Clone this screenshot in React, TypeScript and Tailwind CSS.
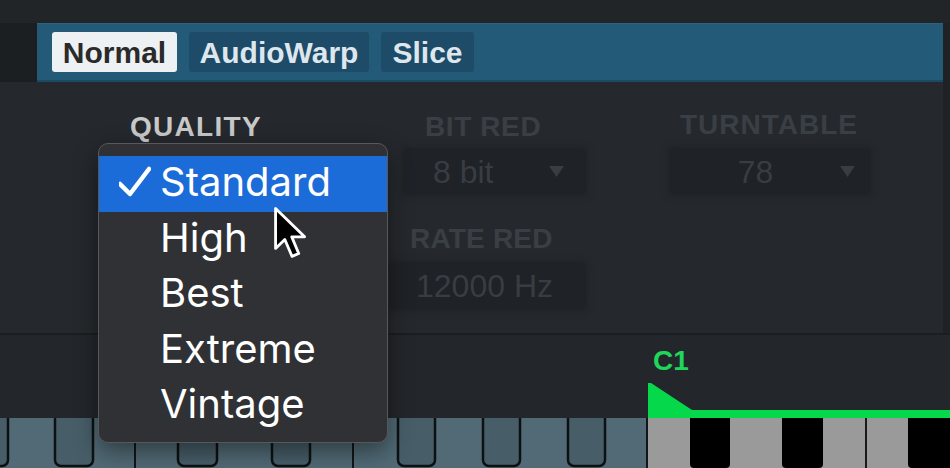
import React from "react"

const tabs = [
  { name: "Normal", active: true, w: "w-[125px]" },
  { name: "AudioWarp", active: false, w: "w-[180px]" },
  { name: "Slice", active: false, w: "w-[93px]" },
]

const qualities = ["Standard", "High", "Best", "Extreme", "Vintage"]

// black key spans across the visible octave strip
const tintedBlack: [number, number][] = [
  [-30, 8],
  [55, 93],
  [178, 217],
  [272, 310],
  [398, 435],
  [483, 520],
  [568, 605],
]
const activeBlack: [number, number][] = [
  [690, 730],
  [782, 823],
  [908, 960],
]

function Arrow() {
  return (
    <svg width="15" height="11" viewBox="0 0 15 11">
      <polygon points="0,0 15,0 7.5,11" fill="#383d43" />
    </svg>
  )
}

function Keyboard() {
  return (
    <svg width="950" height="50" viewBox="0 0 950 50" className="block">
      <rect x="0" y="0" width="648" height="50" fill="#516a75" />
      <rect x="648" y="0" width="302" height="50" fill="#9a9a9a" />
      {/* white key seams */}
      <rect x="134" y="0" width="2" height="50" fill="#131619" />
      <rect x="352" y="0" width="2" height="50" fill="#131619" />
      <rect x="646" y="0" width="2" height="50" fill="#131619" />
      <rect x="865" y="0" width="2" height="50" fill="#1a1a1a" />
      {tintedBlack.map(([a, b]) => (
        <rect
          key={a}
          x={a}
          y={-12}
          width={b - a}
          height={60}
          rx={6}
          fill="#475e69"
          stroke="#0e1113"
          strokeWidth={2.5}
        />
      ))}
      {activeBlack.map(([a, b]) => (
        <rect key={a} x={a} y={-12} width={b - a} height={62} rx={4} fill="#000" />
      ))}
    </svg>
  )
}

function Cursor() {
  return (
    <svg width="36" height="54" viewBox="0 0 14 21">
      <path
        d="M1 1 L1 16.5 L4.6 13 L7.4 19.6 L10 18.5 L7.3 12 L12.3 12 Z"
        fill="#000"
        stroke="#fff"
        strokeWidth="1.1"
        strokeLinejoin="round"
      />
    </svg>
  )
}

export default function App() {
  return (
    <div className="w-[950px] h-[468px] overflow-hidden flex flex-col bg-[#24282c] font-['Liberation_Sans',Arial,sans-serif]">
      <div className="h-[23px] bg-[#222528]" />

      {/* mode tabs */}
      <div className="flex h-[59px]">
        <div className="w-[37px] bg-[#1c1f22]" />
        <div className="flex-1 flex items-center gap-[12px] pl-[15px] bg-[#235a78] border-t border-[#2a6383] border-b-2 border-b-[#1d4a63]">
          {tabs.map((t) => (
            <div
              key={t.name}
              className={`${t.w} h-[40px] flex items-center justify-center text-[30px] font-bold rounded-[3px] ${
                t.active ? "bg-[#eef1f3] text-[#2a2a2a]" : "bg-[#1d4b68] text-[#dfe7ee]"
              }`}
            >
              {t.name}
            </div>
          ))}
        </div>
        <div className="w-[7px] bg-[#1f2225]" />
      </div>

      {/* sample processing panel */}
      <div className="flex h-[251px]">
        <div className="relative flex-1 flex bg-[#25292d]">
          <div className="ml-[100px] w-[285px] flex flex-col">
            <div className="ml-[30px] mt-[31px] h-[28px] leading-[28px] text-[28px] font-bold tracking-[1.3px] text-[#c9c9c9]">
              QUALITY
            </div>
            <div className="mt-[9px] h-[43px] bg-[#1f2226]" />
          </div>

          <div className="ml-[6px] w-[193px] flex flex-col">
            <div className="ml-[34px] mt-[31px] h-[28px] leading-[28px] text-[28px] font-bold tracking-[0.6px] text-[#3a3f45]">
              BIT RED
            </div>
            <div className="ml-[14px] mt-[9px] h-[43px] flex items-center pl-[28px] pr-[20px] bg-[#1f2226] shadow-[0_0_6px_2px_rgba(24,27,30,0.6)]">
              <span className="flex-1 text-[32px] text-[#383d43]">8 bit</span>
              <Arrow />
            </div>
            <div className="ml-[19px] mt-[32px] h-[28px] leading-[28px] text-[28px] font-bold tracking-[0.2px] text-[#3a3f45]">
              RATE RED
            </div>
            <div className="mt-[11px] h-[44px] flex items-center pl-[25px] bg-[#1f2226] shadow-[0_0_6px_2px_rgba(24,27,30,0.6)]">
              <span className="text-[32px] text-[#383d43]">12000 Hz</span>
            </div>
          </div>

          <div className="ml-[87px] w-[198px] flex flex-col">
            <div className="ml-[9px] mt-[29px] h-[28px] leading-[28px] text-[28px] font-bold tracking-[1px] text-[#3a3f45]">
              TURNTABLE
            </div>
            <div className="mt-[11px] h-[43px] flex items-center pr-[14px] bg-[#1f2226] shadow-[0_0_6px_2px_rgba(24,27,30,0.6)]">
              <span className="flex-1 text-center text-[32px] text-[#383d43]">78</span>
              <Arrow />
            </div>
          </div>

          {/* open quality menu */}
          <div className="absolute left-[98px] top-[61px] w-[290px] h-[300px] z-10 pt-[12px] rounded-[10px] bg-[#2f3134] border border-[#56585b] shadow-[0_8px_24px_rgba(0,0,0,0.45)] font-['Inter',sans-serif]">
            {qualities.map((q, i) => (
              <div
                key={q}
                className={`h-[55.5px] flex items-center pl-[20px] pb-[3px] text-[40px] text-white ${
                  i === 0 ? "bg-[#1b6cd8]" : ""
                }`}
              >
                <span className="w-[32px] mr-[9px] flex">
                  {i === 0 && (
                    <svg width="32" height="32" viewBox="0 0 32 32">
                      <polyline
                        points="1,18 11,28 30,3"
                        fill="none"
                        stroke="#fff"
                        strokeWidth="4.5"
                        strokeLinecap="round"
                        strokeLinejoin="round"
                      />
                    </svg>
                  )}
                </span>
                {q}
              </div>
            ))}
          </div>

          <div className="absolute left-[273px] top-[124px] z-20">
            <Cursor />
          </div>
        </div>
        <div className="w-[7px] bg-[#1f2225]" />
      </div>

      <div className="h-[2px] bg-[#1b1e21]" />

      {/* key zone marker */}
      <div className="flex-1 flex flex-col pl-[648px] bg-[#23272b]">
        <div className="ml-[5px] mt-[12px] h-[28px] leading-[28px] text-[28px] font-bold text-[#1fd65a]">C1</div>
        <svg width="302" height="35" viewBox="0 0 302 35" className="mt-auto block">
          <polygon points="0,0 3,0 44,27 302,27 302,35 0,35" fill="#06d84b" />
        </svg>
      </div>

      <Keyboard />
    </div>
  )
}
